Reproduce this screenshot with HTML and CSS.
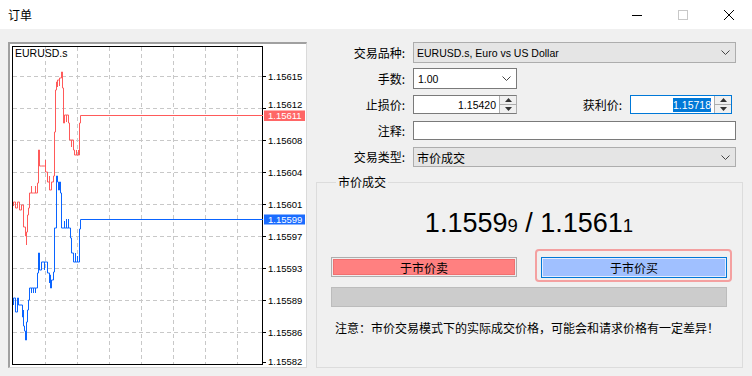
FILE: index.html
```html
<!DOCTYPE html>
<html lang="zh-CN">
<head>
    <meta charset="UTF-8">
    <title>订单</title>
    <link rel="stylesheet" href="styles.css">
</head>
<body>
    <div class="titlebar">
        <span class="title">订单</span>
        <div class="controls">
            <div class="ctl"><svg width="10" height="10" viewBox="0 0 10 10"><path d="M0 5.5H10" stroke="#000" stroke-width="1"/></svg></div>
            <div class="ctl"><svg width="10" height="10" viewBox="0 0 10 10"><rect x="0.5" y="0.5" width="9" height="9" fill="none" stroke="#c8c8c8"/></svg></div>
            <div class="ctl"><svg width="10" height="10" viewBox="0 0 10 10"><path d="M0 0L10 10M10 0L0 10" stroke="#000" stroke-width="1"/></svg></div>
        </div>
    </div>

    <div class="main">
        <div class="chart">
            <svg width="296" height="323" viewBox="10 44 296 323">
                <rect x="10" y="44" width="296" height="323" fill="#fff"/>
                <g class="grid">
                    <path d="M45.5 47V364M77.5 47V364M109.5 47V364M141.5 47V364M173.5 47V364M205.5 47V364M237.5 47V364"/>
                    <path d="M13 76.5H262M13 108.5H262M13 140.5H262M13 172.5H262M13 204.5H262M13 236.5H262M13 268.5H262M13 300.5H262M13 332.5H262"/>
                </g>
                <rect x="12.5" y="46.5" width="250" height="318" fill="none" stroke="#000"/>
                <path d="M263 76.5H266M263 108.5H266M263 140.5H266M263 172.5H266M263 204.5H266M263 236.5H266M263 268.5H266M263 300.5H266M263 332.5H266M263 362.5H266" stroke="#000"/>
                <text x="15" y="57" class="sym">EURUSD.s</text>

                <path class="ask" d="M13.5 206V202H15.5V208H17.5V202H19.5V210H21.5V205H23.5V227H25.5V236H26.5V245V232H27.5V215H28.5V208H29.5V193H31.5V186V193H33.5V193H35.5V186V193H37.5V183H38.5V150H39.5V166H41.5V166H44.5V166H45.5V160V172H47.5V182H49.5V176V190H51.5V182H53.5V176H54.5V132H55.5V90H56.5V82H57.5V87V80H59.5V86V78H61.5V72H62.5V88H63.5V123H64.5V115H66.5V122V115H68.5V123H69.5V140H71.5V147V140H73.5V150H74.5V155H76.5V150V155H78.5V150V155H79.5V123H80.5V115.5H263"/>
                <path class="bid" d="M13.5 305V298H15.5V312H17.5V298H18.5V305H22.5V317H23.5V310V326H24.5V331H25.5V340H26.5V322H27.5V310H28.5V300H29.5V288H31.5V293V288H33.5V293V288H35.5V293V288H37.5V273H38.5V253H39.5V262V270H41.5V262H44.5V270V262H46.5V262H47.5V273H49.5V283V275H50.5V288H51.5V280H53.5V272H54.5V228H56.5V176H57.5V182H58.5V190H59.5V182H60.5V193H61.5V228H64.5V221V228H66.5V219V228H68.5V219V228H70.5V238H71.5V253H73.5V258V262H75.5V253V262H77.5V256V262H79.5V229H80.5V219.5H263"/>

                <g class="axis">
                    <text x="268" y="80">1.15615</text>
                    <text x="268" y="108">1.15612</text>
                    <text x="268" y="144">1.15608</text>
                    <text x="268" y="176">1.15604</text>
                    <text x="268" y="208">1.15601</text>
                    <text x="268" y="240">1.15597</text>
                    <text x="268" y="272">1.15593</text>
                    <text x="268" y="304">1.15589</text>
                    <text x="268" y="336">1.15586</text>
                    <text x="268" y="365">1.15582</text>
                </g>
                <rect x="264" y="110.5" width="41" height="10.5" fill="#ff6666"/>
                <text x="268" y="119" class="tag">1.15611</text>
                <rect x="264" y="214.5" width="41" height="10" fill="#1a6cff"/>
                <text x="268" y="223" class="tag">1.15599</text>
            </svg>
        </div>

        <div class="form">
            <div class="row r-symbol">
                <span class="lbl">交易品种:</span>
                <div class="select wide">
                    <span>EURUSD.s, Euro vs US Dollar</span>
                    <svg class="chev" width="9" height="5" viewBox="0 0 9 5"><path d="M0.5 0.5L4.5 4.5L8.5 0.5" fill="none" stroke="#444"/></svg>
                </div>
            </div>
            <div class="row r-volume">
                <span class="lbl">手数:</span>
                <div class="combo">
                    <span>1.00</span>
                    <svg class="chev" width="9" height="5" viewBox="0 0 9 5"><path d="M0.5 0.5L4.5 4.5L8.5 0.5" fill="none" stroke="#444"/></svg>
                </div>
            </div>
            <div class="row r-levels">
                <span class="lbl">止损价:</span>
                <div class="spin">
                    <div class="spin-input">1.15420</div>
                    <div class="spin-btns">
                        <div class="arr"><svg width="7" height="4" viewBox="0 0 7 4"><path d="M3.5 0L7 4H0Z" fill="#333"/></svg></div>
                        <div class="arr"><svg width="7" height="4" viewBox="0 0 7 4"><path d="M0 0H7L3.5 4Z" fill="#333"/></svg></div>
                    </div>
                </div>
                <span class="lbl lbl-tp">获利价:</span>
                <div class="spin focus">
                    <div class="spin-input"><span class="sel">1.15718</span></div>
                    <div class="spin-btns">
                        <div class="arr"><svg width="7" height="4" viewBox="0 0 7 4"><path d="M3.5 0L7 4H0Z" fill="#333"/></svg></div>
                        <div class="arr"><svg width="7" height="4" viewBox="0 0 7 4"><path d="M0 0H7L3.5 4Z" fill="#333"/></svg></div>
                    </div>
                </div>
            </div>
            <div class="row r-comment">
                <span class="lbl">注释:</span>
                <div class="text-input"></div>
            </div>
            <div class="row r-type">
                <span class="lbl">交易类型:</span>
                <div class="select wide">
                    <span>市价成交</span>
                    <svg class="chev" width="9" height="5" viewBox="0 0 9 5"><path d="M0.5 0.5L4.5 4.5L8.5 0.5" fill="none" stroke="#444"/></svg>
                </div>
            </div>

            <fieldset class="group">
                <legend>市价成交</legend>
                <div class="quote">1.1559<small>9</small> / 1.1561<small>1</small></div>
                <div class="buttons">
                    <div class="btn sell">于市价卖</div>
                    <div class="focus-ring">
                        <div class="btn buy">于市价买</div>
                    </div>
                </div>
                <div class="progress"></div>
                <p class="note">注意：市价交易模式下的实际成交价格，可能会和请求价格有一定差异！</p>
            </fieldset>
        </div>
    </div>
</body>
</html>
```

FILE: styles.css
```css
body {
    margin: 0;
    width: 752px;
    height: 376px;
    overflow: hidden;
    background-color: #f0f0f0;
    font-family: "Liberation Sans", "Noto Sans CJK SC", sans-serif;
    font-size: 12px;
    color: #000;
}
.titlebar {
    height: 29px;
    background-color: #fff;
    display: flex;
    align-items: center;
}
.title {
    margin-left: 8px;
    font-family: "Noto Sans CJK SC", sans-serif;
    font-size: 12px;
}
.controls {
    margin-left: auto;
    display: flex;
}
.ctl {
    width: 46px;
    height: 29px;
    display: flex;
    align-items: center;
    justify-content: center;
}
.main {
    display: flex;
    align-items: flex-start;
}
.chart {
    margin: 13px 0 0 8px;
    border-style: solid;
    border-width: 2px 1px 1px 2px;
    border-color: #a0a0a0 #dadada #dadada #a0a0a0;
    line-height: 0;
}
.chart svg {
    display: block;
}
.grid path {
    stroke: #c8c8c8;
    stroke-dasharray: 4 3;
    fill: none;
}
.ask, .bid {
    fill: none;
    stroke-width: 1;
}
.ask {
    stroke: #ff5a5a;
}
.bid {
    stroke: #0a64ff;
}
.sym {
    font-family: "Liberation Sans", sans-serif;
    font-size: 10.5px;
}
.axis text, .tag {
    font-family: "Liberation Sans", sans-serif;
    font-size: 9.5px;
}
.tag {
    fill: #fff;
}
.form {
    flex: 1;
    padding-top: 13px;
}
.row {
    display: flex;
    align-items: center;
}
.lbl {
    width: 98px;
    margin-right: 8px;
    text-align: right;
    font-family: "Noto Sans CJK SC", sans-serif;
    font-size: 12px;
    line-height: 16px;
}
.lbl-tp {
    width: 105px;
}
.r-symbol { height: 21px; }
.r-volume { height: 21px; margin-top: 5px; }
.r-levels { height: 19px; margin-top: 6px; }
.r-comment { height: 19px; margin-top: 7px; }
.r-type { height: 20px; margin-top: 7px; }
.select, .combo, .text-input, .spin {
    box-sizing: border-box;
    height: 100%;
    display: flex;
    align-items: center;
    font-size: 10.5px;
}
.select {
    background-color: #e5e5e5;
    border: 1px solid #adadad;
    padding-left: 3px;
}
.r-type .select {
    font-family: "Noto Sans CJK SC", sans-serif;
    font-size: 12px;
}
.wide {
    width: 323px;
}
.chev {
    margin-left: auto;
    margin-right: 5px;
}
.combo {
    width: 104px;
    background-color: #fff;
    border: 1px solid #7a7a7a;
    padding-left: 4px;
}
.text-input {
    width: 323px;
    background-color: #fff;
    border: 1px solid #7a7a7a;
}
.spin {
    width: 104px;
    border: 1px solid #7a7a7a;
    border-right-color: #adadad;
    background-color: #fff;
}
.spin.focus {
    width: 102px;
    border-color: #0078d7;
}
.spin-input {
    flex: 1;
    text-align: right;
    padding-right: 3px;
}
.sel {
    background-color: #0078d7;
    color: #fff;
    padding: 1px 0;
}
.spin-btns {
    width: 16px;
    height: 100%;
    display: flex;
    flex-direction: column;
    border-left: 1px solid #adadad;
    background-color: #f0f0f0;
}
.arr {
    flex: 1;
    display: flex;
    align-items: center;
    justify-content: center;
}
.arr + .arr {
    border-top: 1px solid #adadad;
}
.group {
    margin: 8px 9px 0 9px;
    padding: 0 15px 31px 14px;
    border: 1px solid #dcdcdc;
    min-width: 0;
}
.group legend {
    margin-left: 5px;
    padding: 0 2px;
    font-family: "Noto Sans CJK SC", sans-serif;
    font-size: 12px;
    line-height: 14px;
}
.quote {
    margin-top: 19px;
    height: 30px;
    line-height: 30px;
    text-align: center;
    font-size: 27px;
}
.quote small {
    font-size: 18.5px;
}
.buttons {
    display: flex;
    align-items: flex-start;
    margin-top: 11px;
}
.btn {
    box-sizing: border-box;
    width: 186px;
    display: flex;
    align-items: center;
    justify-content: center;
    font-family: "Noto Sans CJK SC", sans-serif;
    font-size: 12px;
}
.sell {
    height: 20px;
    margin-top: 8px;
    background-color: #ff8080;
    border: 1px solid #adadad;
    box-shadow: inset 0 0 0 1px #eeeeee, inset 0 0 0 2px #f07070;
}
.focus-ring {
    margin-left: 18px;
    margin-right: -5px;
    padding: 6px 3px 2px 4px;
    border: 2px solid #f4a0a0;
    border-radius: 4px;
}
.buy {
    height: 21px;
    background-color: #a0c0ff;
    border: 1px solid #0078d7;
    box-shadow: inset 0 0 0 1px #e4ecff;
}
.progress {
    box-sizing: border-box;
    height: 20px;
    margin-top: 5px;
    background-color: #cccccc;
    border: 1px solid #bcbcbc;
}
.note {
    margin: 13px 0 0 4px;
    line-height: 16px;
    font-family: "Noto Sans CJK SC", sans-serif;
    font-size: 12px;
}
```
